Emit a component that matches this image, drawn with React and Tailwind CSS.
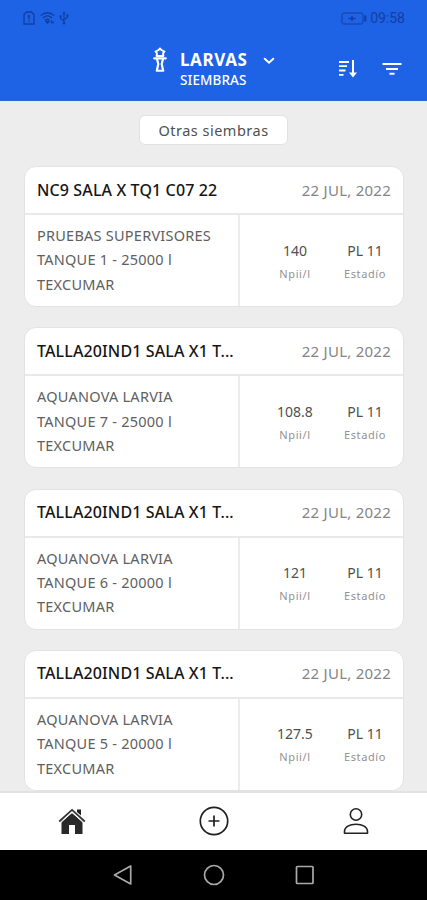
/* ─── Sowing records ─── */
const sowings = [
  { title: "NC9 SALA X TQ1 C07 22", lab: "PRUEBAS SUPERVISORES", tank: "TANQUE 1 - 25000 l", npl: "140" },
  { title: "TALLA20IND1 SALA X1 T...", lab: "AQUANOVA LARVIA", tank: "TANQUE 7 - 25000 l", npl: "108.8" },
  { title: "TALLA20IND1 SALA X1 T...", lab: "AQUANOVA LARVIA", tank: "TANQUE 6 - 20000 l", npl: "121" },
  { title: "TALLA20IND1 SALA X1 T...", lab: "AQUANOVA LARVIA", tank: "TANQUE 5 - 20000 l", npl: "127.5" },
];

const StatusBar = () => (
  <div className="flex h-9 items-center justify-between pr-[22px] pl-[23px] text-[#123f9f]">
    <div className="flex items-center gap-[4.5px]">
      <svg width="12" height="14" viewBox="0 0 12 14" fill="none" stroke="currentColor" strokeWidth="1.3">
        <path d="M3.5 1h5L11 3.5V13H1V3.5z" />
        <path d="M6 4v4.5M6 9.7v1.3M4.7 5.5 6 4.2" />
      </svg>
      <svg width="15" height="14" viewBox="0 0 15 14" fill="none" stroke="currentColor" strokeWidth="1.3">
        <path d="M.7 4.6C4.6.8 10.2.8 14.2 4.6M3 7c2.8-2.6 6.2-2.6 9 0M5.2 9.2c1.3-1.2 3-1.2 4.3 0" />
        <path d="m6 10.5 1.5 1.8L9 10.5zM11 11.5h3M12 9.5l-1 2" />
      </svg>
      <svg width="10" height="14" viewBox="0 0 10 14" fill="none" stroke="currentColor" strokeWidth="1.2">
        <path d="M5 2v10M5 10 1.5 7.5V5.5M5 8.5l3.5-2V4.5" />
        <path d="M3.6 2.7 5 .6l1.4 2.1zM.8 4.5h1.5v1.5H.8zM7.8 3.8h1.4v1.4H7.8z" fill="currentColor" strokeWidth=".4" />
        <circle cx="5" cy="12.3" r="1.2" fill="currentColor" stroke="none" />
      </svg>
    </div>
    <div className="flex items-center gap-[3px] pt-px">
      <svg width="26" height="13" viewBox="0 0 26 13" fill="none" stroke="currentColor">
        <rect x="1" y="1" width="21" height="11" rx="1.8" />
        <path d="M24.3 3.5v6" strokeWidth="2" />
        <path d="M7.5 6.5h7M11 4v5" strokeWidth="1.5" />
      </svg>
      <span className="font-['Roboto',sans-serif] text-[14px]">09:58</span>
    </div>
  </div>
);

const LarvaIcon = () => (
  <svg width="14" height="25" viewBox="0 0 14 25" fill="none" stroke="white" strokeWidth="1.9" strokeLinejoin="round" strokeLinecap="round">
    <path d="m7 1.5 1.5 1.7 3 1.3-1.5 1.8.4 2.7H3.600L4 6.300 2.500 4.500l3-1.300z" />
    <path d="M1.2 11.300h11.600" strokeWidth="2.2" />
    <path d="M4 12l1.3 5-1.3 6M10 12l-1.300 5 1.300 6" strokeWidth="2.2" />
    <path d="M3.600 23.700h6.800" />
  </svg>
);

const Header = () => (
  <header className="h-[101px] shrink-0 border-b border-[#2c68c8] bg-[#1e62e6] text-white">
    <StatusBar />
    <div className="flex pt-[11px] pl-[153px]">
      <LarvaIcon />
      <div className="ml-[13px] w-[68px] pt-px whitespace-nowrap">
        <h1 className="text-[17px] leading-[24px] font-bold tracking-[0.6px]">LARVAS</h1>
        <p className="text-[13.5px] leading-[16px] font-medium tracking-[0.1px]">SIEMBRAS</p>
      </div>
      <svg className="mt-[10px] ml-[15px]" width="12" height="8" viewBox="0 0 12 8" fill="none" stroke="white" strokeWidth="2" strokeLinecap="round">
        <path d="m1.7 1.7 4.3 4 4.3-4" />
      </svg>
      <svg className="mt-[12px] ml-[63px]" width="19" height="20" viewBox="0 0 19 20" fill="none" stroke="white" strokeWidth="1.8">
        <path d="M1 3h10M1 7.200h8M1 11.500h6.500M1 15.800h4.500" />
        <path d="M15 1v15" strokeWidth="2" />
        <path d="m11 13.500 4 5 4-5z" fill="white" stroke="none" />
      </svg>
      <svg className="mt-[15px] ml-[25px]" width="20" height="14" viewBox="0 0 20 14" fill="none" stroke="white" strokeWidth="1.9">
        <path d="M.5 2h19M4 7h12M7.500 11.700h5" />
      </svg>
    </div>
  </header>
);

const Stat = ({ value, label }) => (
  <div className="flex w-[70px] flex-col items-center whitespace-nowrap">
    <span className="text-[14px] leading-[22px] text-[#505050]">{value}</span>
    <span className="text-[11px] leading-[23px] tracking-[0.6px] text-[#929292]">{label}</span>
  </div>
);

const SowingCard = ({ sowing }) => (
  <article className="h-[141px] shrink-0 overflow-hidden rounded-xl border border-[#e3e3e3] bg-white">
    <div className="flex h-[48px] items-center justify-between border-b-2 border-[#e9e9e9] pr-[12px] pb-px pl-3 whitespace-nowrap">
      <h2 className="text-[16px] leading-[44px] font-medium tracking-[0.12px] text-[#161616]">{sowing.title}</h2>
      <span className="text-[15px] leading-[44px] tracking-[0.25px] text-[#858585]">22 JUL, 2022</span>
    </div>
    <div className="flex h-[91px]">
      <div className="w-[215px] border-r-2 border-[#ececec] pt-[8px] pl-3 text-[14.5px] leading-[24.4px] tracking-[0.24px] whitespace-nowrap text-[#606060]">
        <p>{sowing.lab}</p>
        <p>{sowing.tank}</p>
        <p>TEXCUMAR</p>
      </div>
      <div className="flex flex-1 pt-[24.5px] pl-[20px]">
        <Stat value={sowing.npl} label="Npii/l" />
        <Stat value="PL 11" label="Estadío" />
      </div>
    </div>
  </article>
);

const BottomNav = () => (
  <nav className="flex h-[59px] shrink-0 items-center border-t-2 border-[#e2e2e2] bg-white">
    <div className="flex flex-1 justify-center pb-[2px] pl-px">
      <svg width="28" height="28" viewBox="0 0 28 28">
        <path d="M19 2.500h4v6l-4-3.500z" fill="#222" />
        <path d="m14 6 10.500 8.500V27H17v-9h-6v9H3.500V14.500z" fill="#292929" />
        <path d="M1.2 14.500 14 2.800l12.800 11.700" fill="none" stroke="#333" strokeWidth="1.7" />
        <path d="M2.6 15.800 14 5.400l11.400 10.400" fill="none" stroke="white" strokeWidth="1" />
      </svg>
    </div>
    <div className="flex flex-1 justify-center pb-[2px]">
      <svg width="30" height="30" viewBox="0 0 30 30" fill="none" stroke="#202020" strokeWidth="1.7">
        <circle cx="15" cy="15" r="13.7" />
        <path d="M15 9.500v11M9.500 15h11" />
      </svg>
    </div>
    <div className="flex flex-1 justify-center pb-[2px] pl-px">
      <svg width="26" height="28" viewBox="0 0 26 28" fill="none" stroke="#222" strokeWidth="1.6" strokeLinejoin="round">
        <circle cx="13" cy="7.5" r="5.7" />
        <path d="M1.500 26.200v-1.700c0-4.500 5-7.300 11.500-7.300s11.500 2.800 11.500 7.300v1.700z" />
      </svg>
    </div>
  </nav>
);

const SystemNav = () => (
  <div className="flex h-[50px] shrink-0 items-center bg-black pl-[113px]">
    <svg width="20" height="22" viewBox="0 0 20 22" fill="none" stroke="#aaa" strokeWidth="1.7" strokeLinejoin="round">
      <path d="M17.700 2v18L1.500 11z" />
    </svg>
    <svg className="ml-[70px]" width="22" height="22" viewBox="0 0 22 22" fill="none" stroke="#aaa" strokeWidth="1.7">
      <circle cx="11" cy="11" r="9.5" />
    </svg>
    <svg className="ml-[70px]" width="20" height="20" viewBox="0 0 20 20" fill="none" stroke="#aaa" strokeWidth="1.7">
      <rect x="1.5" y="1.5" width="16.5" height="17" rx=".8" />
    </svg>
  </div>
);

export default function App() {
  return (
    <div className="flex h-[900px] w-[427px] flex-col overflow-hidden bg-[#ededed] font-['Noto_Sans',sans-serif]">
      <Header />

      <main className="flex min-h-0 flex-1 flex-col overflow-hidden">
        <button className="mx-auto mt-[14px] h-[30px] w-[149px] shrink-0 rounded-md border border-[#e2e2e2] bg-white text-[14.5px] leading-[27px] tracking-[0.5px] text-[#505050]">
          Otras siembras
        </button>
        <div className="mt-[21px] flex flex-col gap-[20.3px] pr-[23px] pl-[24px]">
          {sowings.map((sowing, i) => (
            <SowingCard key={i} sowing={sowing} />
          ))}
        </div>
      </main>

      <BottomNav />
      <SystemNav />
    </div>
  );
}
